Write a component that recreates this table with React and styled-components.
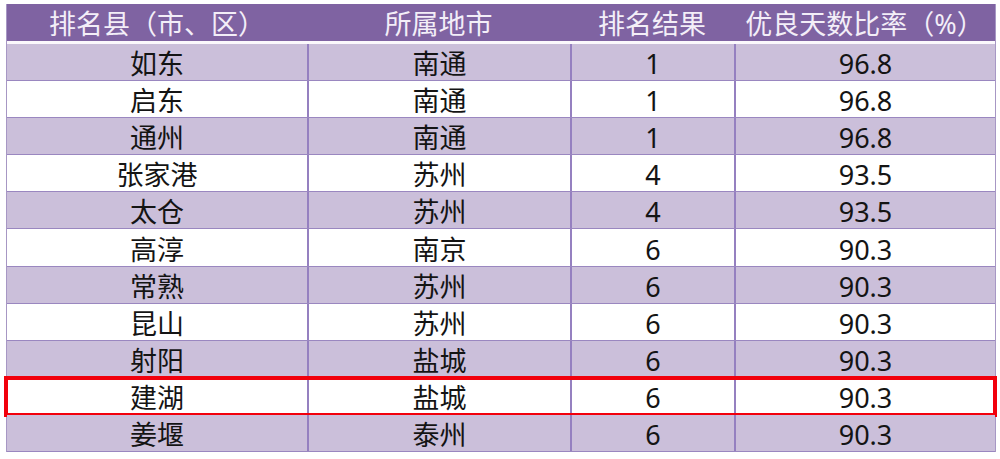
import React from "react";
import styled, { createGlobalStyle } from "styled-components";

const Global = createGlobalStyle`
  html, body { margin: 0; padding: 0; background: #ffffff; }
  body { font-family: "Noto Sans", "Noto Sans CJK SC", sans-serif; }
`;

const Page = styled.div`
  width: 1000px;
  height: 459px;
  padding: 4px 0 0 6px;
  box-sizing: border-box;
  background: #ffffff;
`;

const Table = styled.div`
  width: 990px;
  display: flex;
  flex-direction: column;
  border-left: 1px solid #a797c4;
  border-right: 1px solid #a797c4;
  box-sizing: border-box;
`;

const cols = "300px 263px 164px 261px";

const HeaderRow = styled.div`
  display: grid;
  grid-template-columns: ${cols};
  height: 37px;
  background: #7f63a2;
  border-bottom: 3px solid #fbf8fc;
`;

const HeaderCell = styled.div`
  display: flex;
  align-items: center;
  justify-content: center;
  color: #f3eef8;
  font-size: 27px;
  line-height: 1;
  padding-top: 1px;
  white-space: nowrap;
`;

const Row = styled.div`
  position: relative;
  display: grid;
  grid-template-columns: ${cols};
  height: 37.1px;
  box-sizing: border-box;
  background: ${(p) => (p.$shaded ? "#cbbfda" : "#ffffff")};
  border-bottom: 1px solid #9a87c0;

  ${(p) =>
    p.$highlight &&
    `
    &::after {
      content: "";
      position: absolute;
      top: -2px;
      bottom: -3px;
      left: -3px;
      right: -2px;
      border: 4px solid #f2000c;
      pointer-events: none;
    }
  `}
`;

const Cell = styled.div`
  display: flex;
  align-items: center;
  justify-content: center;
  color: #141414;
  font-size: 27px;
  line-height: 1;
  padding-top: 3px;
  border-left: ${(p) => (p.$first ? "none" : "2px solid #9580c0")};
  white-space: nowrap;
`;

const header = ["排名县（市、区）", "所属地市", "排名结果", "优良天数比率（%）"];

const rows = [
  ["如东", "南通", "1", "96.8"],
  ["启东", "南通", "1", "96.8"],
  ["通州", "南通", "1", "96.8"],
  ["张家港", "苏州", "4", "93.5"],
  ["太仓", "苏州", "4", "93.5"],
  ["高淳", "南京", "6", "90.3"],
  ["常熟", "苏州", "6", "90.3"],
  ["昆山", "苏州", "6", "90.3"],
  ["射阳", "盐城", "6", "90.3"],
  ["建湖", "盐城", "6", "90.3"],
  ["姜堰", "泰州", "6", "90.3"],
];

export default function App() {
  return (
    <>
      <Global />
      <Page>
        <Table>
          <HeaderRow>
            {header.map((h) => (
              <HeaderCell key={h}>{h}</HeaderCell>
            ))}
          </HeaderRow>
          {rows.map((r, i) => (
            <Row key={i} $shaded={i % 2 === 0} $highlight={r[0] === "建湖"}>
              {r.map((c, j) => (
                <Cell key={j} $first={j === 0}>
                  {c}
                </Cell>
              ))}
            </Row>
          ))}
        </Table>
      </Page>
    </>
  );
}
